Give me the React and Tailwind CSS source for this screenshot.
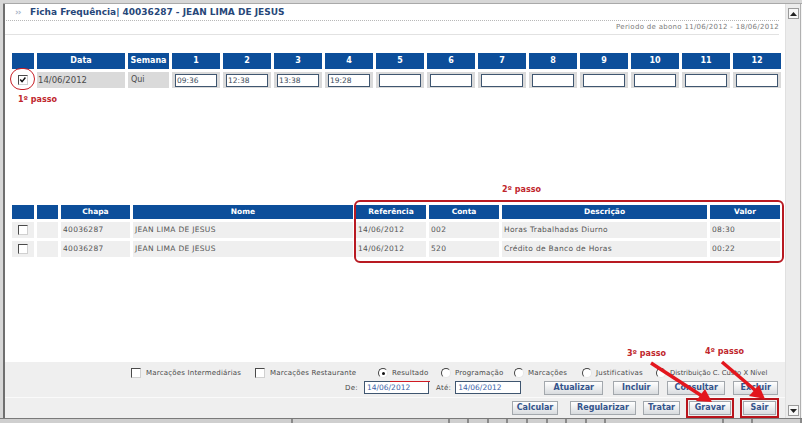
import React from "react";

function Check({ checked }) {
  return (
    <span className="relative inline-block w-[10px] h-[10px] bg-white border border-t-[#4a4a4a] border-l-[#4a4a4a] border-b-[#d0d0d0] border-r-[#d0d0d0] shrink-0">
      {checked && (
        <svg viewBox="0 0 10 10" className="absolute left-0 top-0 w-[8px] h-[8px]">
          <path d="M1.5 4.5 L3.8 7 L8 1.8" stroke="#111" strokeWidth="1.8" fill="none" />
        </svg>
      )}
    </span>
  );
}

function Radio({ on }) {
  return (
    <span className="relative inline-block w-[10px] h-[10px] rounded-full bg-white border border-t-[#444] border-l-[#444] border-b-[#e6e6e6] border-r-[#e6e6e6] shrink-0">
      {on && <span className="absolute left-[2.5px] top-[2.5px] w-[3px] h-[3px] rounded-full bg-[#111]" />}
    </span>
  );
}

function Btn({ label, cls }) {
  return (
    <div className={"h-[14px] border border-[#a3a8ad] bg-gradient-to-b from-[#ffffff] to-[#d9dcdf] text-[#34548c] font-bold text-[8px] leading-none flex items-center justify-center " + cls}>
      {label}
    </div>
  );
}

const hdr1 = ["1", "2", "3", "4", "5", "6", "7", "8", "9", "10", "11", "12"];
const vals1 = ["09:36", "12:38", "13:38", "19:28", "", "", "", "", "", "", "", ""];

export default function App() {
  return (
    <div className="relative w-[802px] h-[423px] bg-[#d7d7d7] flex flex-col overflow-hidden font-['DejaVu_Sans',Verdana,sans-serif]">
      <div className="flex flex-1 min-h-0 mt-[3px] ml-[3px] border-t border-[#a9a9a9]">
        {/* main content */}
        <div className="flex-1 bg-white flex flex-col border-l-2 border-[#6f6f6f]">
          {/* header */}
          <div className="flex items-center h-[16px] pl-[10px] pt-[2px]">
            <span className="text-[#a8b4c8] text-[9px] font-bold w-[15px] tracking-[-1px]">››</span>
            <span className="text-[#274779] text-[9px] font-bold">Ficha Frequência| 40036287 - JEAN LIMA DE JESUS</span>
          </div>
          <div className="mx-[1px] mr-[6px] border-t border-dotted border-[#b8b8b8]" />
          <div className="flex justify-end pr-[6px] pt-[3px] h-[12px] text-[7px] tracking-[0.3px] text-[#7c7c7c] leading-none">
            Periodo de abono 11/06/2012 - 18/06/2012
          </div>
          <div className="mr-[6px] mt-[1px] border-t border-[#e2e2e2]" />

          {/* table 1 */}
          <div className="pl-[7px] mt-[18px]">
            <div className="grid grid-cols-[22px_88px_41px_repeat(12,48px)] gap-[3px]">
              <div className="h-[16px] bg-[#0c4e9a]" />
              <div className="h-[16px] bg-[#0c4e9a] text-white text-[8px] font-bold flex items-center justify-center">Data</div>
              <div className="h-[16px] bg-[#0c4e9a] text-white text-[8px] font-bold flex items-center justify-center">Semana</div>
              {hdr1.map((h) => (
                <div key={h} className="h-[16px] bg-[#0c4e9a] text-white text-[8px] font-bold flex items-center justify-center">{h}</div>
              ))}
              <div className="h-[16px] flex items-center pl-[6px]">
                <Check checked />
              </div>
              <div className="h-[16px] bg-[#dadada] text-[#4a4a4a] text-[8.5px] flex items-center pl-[1px]">14/06/2012</div>
              <div className="h-[16px] bg-[#dadada] text-[#4a4a4a] text-[8px] flex items-center pl-[3px]">Qui</div>
              {vals1.map((v, i) => (
                <div key={i} className="h-[16px] bg-[#dadada] pl-[3px] pr-[3px] pt-[2px] pb-[1px]">
                  <div className="h-full bg-white border border-[#3f5670] text-[7.5px] text-[#3a4a5a] flex items-center pl-[1px]">{v}</div>
                </div>
              ))}
            </div>
            <div className="mt-[8px] ml-[6px] text-[8px] font-bold text-[#c0262c] leading-none">1º passo</div>
          </div>

          {/* 2 passo */}
          <div className="mt-[82px] pl-[497px] text-[8px] font-bold text-[#c0262c] leading-none">2º passo</div>

          {/* table 2 */}
          <div className="pl-[7px] mt-[11px]">
            <div className="grid grid-cols-[22px_21px_69px_220px_70px_70px_205px_70px] gap-[3px] text-[7.5px] tracking-[0.3px]">
              <div className="h-[14px] bg-[#0c4e9a]" />
              <div className="h-[14px] bg-[#0c4e9a]" />
              {["Chapa", "Nome", "Referência", "Conta", "Descrição", "Valor"].map((h) => (
                <div key={h} className="h-[14px] bg-[#0c4e9a] text-white font-bold tracking-normal text-[7.5px] flex items-center justify-center">{h}</div>
              ))}
              {[
                ["40036287", "JEAN LIMA DE JESUS", "14/06/2012", "002", "Horas Trabalhadas Diurno", "08:30"],
                ["40036287", "JEAN LIMA DE JESUS", "14/06/2012", "520", "Crédito de Banco de Horas", "00:22"],
              ].map((r, ri) => (
                <React.Fragment key={ri}>
                  <div className="h-[16px] bg-[#efefef] flex items-center pl-[6px]">
                    <Check />
                  </div>
                  <div className="h-[16px] bg-[#efefef]" />
                  {r.map((c, ci) => (
                    <div key={ci} className="h-[16px] bg-[#efefef] text-[#555] flex items-center pl-[2px] whitespace-nowrap">{c}</div>
                  ))}
                </React.Fragment>
              ))}
            </div>
          </div>

          <div className="flex-1" />

          {/* bottom panel */}
          <div className="h-[56px] bg-[#efefef] flex flex-col text-[7px] text-[#4a4a4a] whitespace-nowrap">
            <div className="h-[20px] flex items-center pl-[126px] pt-[4px] tracking-[0.2px]">
              <div className="w-[124px] flex items-center"><Check /><span className="ml-[5px]">Marcações Intermediárias</span></div>
              <div className="w-[123px] flex items-center"><Check /><span className="ml-[5px]">Marcações Restaurante</span></div>
              <div className="w-[63px] flex items-center"><Radio on /><span className="ml-[4px] relative">Resultado<span className="absolute left-[-2px] right-[-2px] bottom-[-3px] h-[1px] bg-[#d01a22]" /></span></div>
              <div className="w-[73px] flex items-center"><Radio /><span className="ml-[4px]">Programação</span></div>
              <div className="w-[68px] flex items-center"><Radio /><span className="ml-[4px]">Marcações</span></div>
              <div className="w-[74px] flex items-center"><Radio /><span className="ml-[4px]">Justificativas</span></div>
              <div className="flex items-center tracking-normal text-[6.8px]"><Radio /><span className="ml-[4px]">Distribuição C. Custo X Nível</span></div>
            </div>
            <div className="h-[16px] flex items-center pl-[340px] tracking-[0.3px]">
              <span>De:</span>
              <div className="ml-[6px] w-[65px] h-[13px] bg-white border border-[#3f5670] text-[#3b5fa8] text-[7.5px] tracking-normal flex items-center pl-[2px]">14/06/2012</div>
              <span className="ml-[7px]">Até:</span>
              <div className="ml-[4px] w-[66px] h-[13px] bg-white border border-[#3f5670] text-[#3b5fa8] text-[7.5px] tracking-normal flex items-center pl-[2px]">14/06/2012</div>
              <Btn label="Atualizar" cls="ml-[23px] w-[59px] tracking-normal" />
              <Btn label="Incluir" cls="ml-[10px] w-[46px] tracking-normal" />
              <Btn label="Consultar" cls="ml-[8px] w-[58px] tracking-normal" />
              <Btn label="Excluir" cls="ml-[8px] w-[45px] tracking-normal" />
            </div>
            <div className="mt-[2px] border-t border-[#fafafa]" />
            <div className="flex-1 flex items-center pl-[507px]">
              <Btn label="Calcular" cls="w-[46px]" />
              <Btn label="Regularizar" cls="ml-[12px] w-[66px]" />
              <Btn label="Tratar" cls="ml-[7px] w-[37px]" />
              <div className="ml-[6px] border-2 border-[#b8141b] p-[1px]">
                <Btn label="Gravar" cls="w-[42px]" />
              </div>
              <div className="ml-[6px] border-2 border-[#b8141b] p-[1px]">
                <Btn label="Sair" cls="w-[33px]" />
              </div>
            </div>
          </div>
        </div>

        {/* scrollbar */}
        <div className="w-[15px] bg-[#ececec] flex flex-col items-center justify-between pt-[4px] pb-[2px] border-l border-[#e0e0e0]">
          <div className="w-[11px] h-[11px] bg-[#f7f7f7] border border-[#9a9a9a] flex items-center justify-center">
            <svg viewBox="0 0 7 4" className="w-[7px] h-[4px]"><path d="M0 4 L3.5 0 L7 4Z" fill="#222" /></svg>
          </div>
          <div className="w-[11px] h-[11px] bg-[#f7f7f7] border border-[#9a9a9a] flex items-center justify-center">
            <svg viewBox="0 0 7 4" className="w-[7px] h-[4px]"><path d="M0 0 L3.5 4 L7 0Z" fill="#222" /></svg>
          </div>
        </div>
        <div className="w-[2px] bg-[#f4f4f4] border-l border-[#b0b0b0]" />
      </div>

      {/* bottom strip */}
      <div className="h-[5px] bg-[#9c9c9c] border-t border-[#7a7a7a] flex">
        {[300, 160, 20, 20, 20, 20, 20, 20, 20, 20, 120, 30, 50].map((w, i) => (
          <div key={i} className="h-full bg-[#cfcfcf] border-r-2 border-[#8a8a8a]" style={{ width: w }} />
        ))}
      </div>

      {/* annotations */}
      <div className="absolute left-[10px] top-[68px] w-[25px] h-[22px] rounded-full border border-[#c81e25]" />
      <div className="absolute left-[354px] top-[200px] w-[430px] h-[63px] rounded-[6px] border-2 border-[#b81a22]" />
      <div className="absolute left-[627px] top-[350px] text-[8px] font-bold text-[#c0262c] leading-none">3º passo</div>
      <div className="absolute left-[705px] top-[348px] text-[8px] font-bold text-[#c0262c] leading-none">4º passo</div>
      <svg className="absolute left-0 top-0 pointer-events-none" width="802" height="423">
        <line x1="651" y1="363" x2="702" y2="396" stroke="#e3161d" strokeWidth="3.5" />
        <polygon points="712,402 696,401 705,389" fill="#e3161d" />
        <line x1="722" y1="362" x2="756" y2="391" stroke="#e3161d" strokeWidth="3.5" />
        <polygon points="765,399 749,396 759,385" fill="#e3161d" />
      </svg>
    </div>
  );
}
